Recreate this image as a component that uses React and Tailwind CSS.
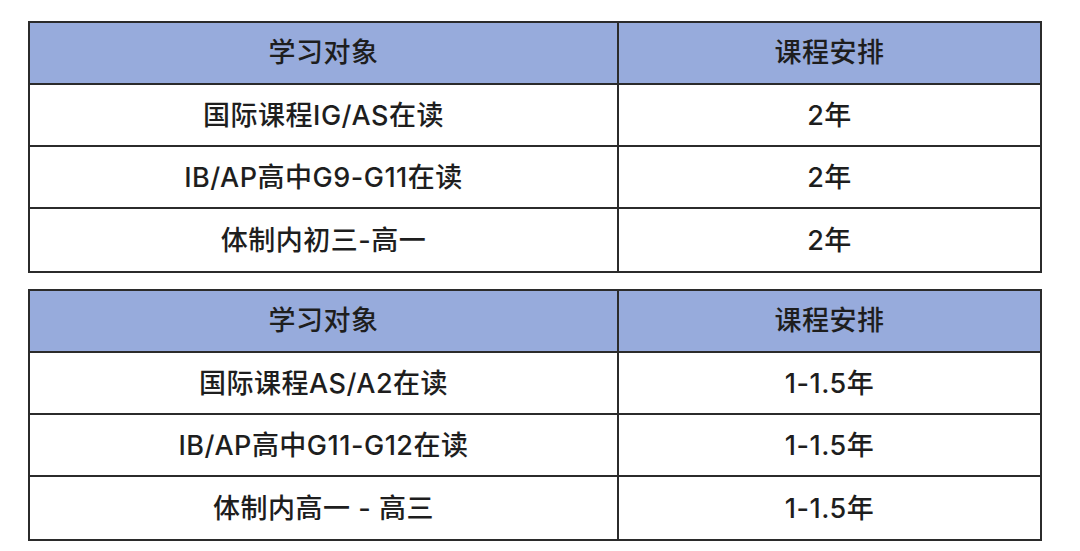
import React from "react";

const tables = [
  [
    ["国际课程IG/AS在读", "2年"],
    ["IB/AP高中G9-G11在读", "2年"],
    ["体制内初三-高一", "2年"],
  ],
  [
    ["国际课程AS/A2在读", "1-1.5年"],
    ["IB/AP高中G11-G12在读", "1-1.5年"],
    ["体制内高一 - 高三", "1-1.5年"],
  ],
];

function Table({ rows }) {
  return (
    <div className="w-[1014px] border-2 border-[#2b2b2b]">
      <div className="grid grid-cols-[589px_1fr] h-[62px] bg-[#97abdc] border-b-2 border-[#2b2b2b]">
        <div className="flex items-center justify-center pt-[1px] border-r-2 border-[#2b2b2b]">学习对象</div>
        <div className="flex items-center justify-center pt-[1px]">课程安排</div>
      </div>
      {rows.map((r, i) => (
        <div
          key={i}
          className={
            "grid grid-cols-[589px_1fr] h-[62px] bg-white " +
            (i < rows.length - 1 ? "border-b-2 border-[#2b2b2b]" : "")
          }
        >
          <div className="flex items-center justify-center pt-[2px] border-r-2 border-[#2b2b2b]">{r[0]}</div>
          <div className="flex items-center justify-center pt-[2px]">{r[1]}</div>
        </div>
      ))}
    </div>
  );
}

export default function App() {
  return (
    <div
      className="w-[1080px] h-[551px] bg-white pt-[21px] pl-[28px] flex flex-col gap-[16px] text-[27px] font-medium tracking-[0.5px] text-[#1e1e1e]"
      style={{ fontFamily: 'Inter, "Noto Sans CJK SC", sans-serif' }}
    >
      {tables.map((t, i) => (
        <Table key={i} rows={t} />
      ))}
    </div>
  );
}
